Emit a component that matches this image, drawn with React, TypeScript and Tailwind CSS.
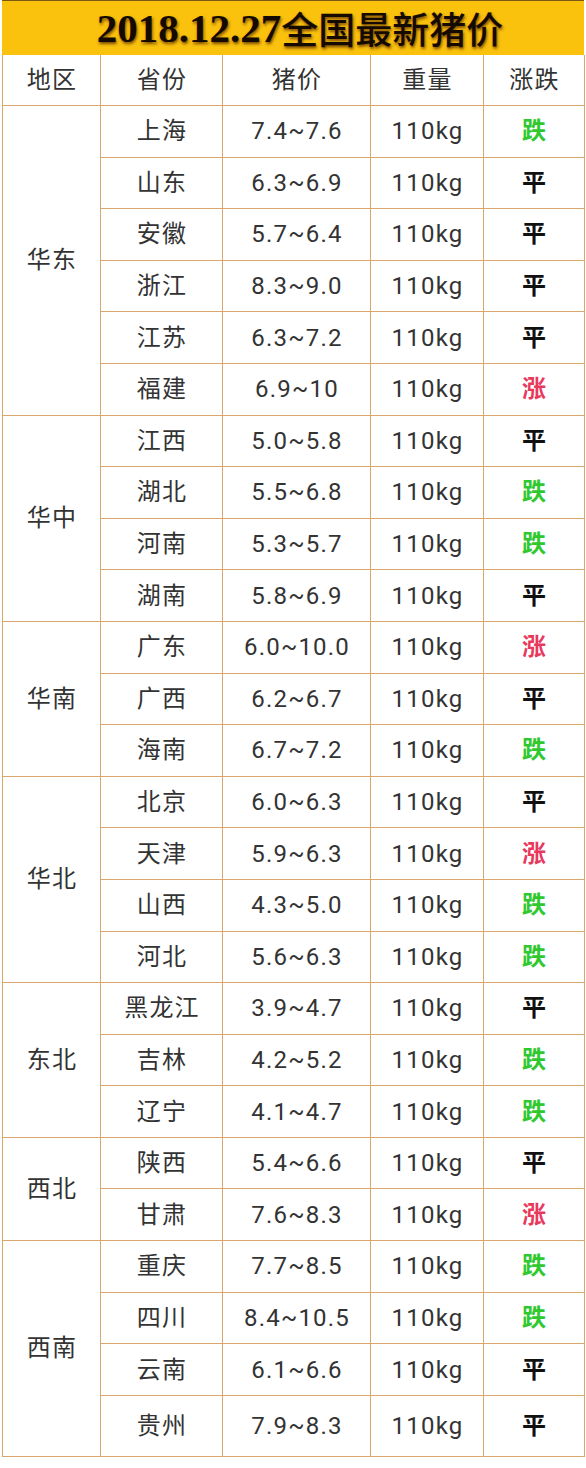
import React from "react";

type Row = { p: string; price: string; t: "up" | "down" | "flat" };
type Group = { region: string; rows: Row[] };

const groups: Group[] = [
  {
    region: "华东",
    rows: [
      { p: "上海", price: "7.4~7.6", t: "down" },
      { p: "山东", price: "6.3~6.9", t: "flat" },
      { p: "安徽", price: "5.7~6.4", t: "flat" },
      { p: "浙江", price: "8.3~9.0", t: "flat" },
      { p: "江苏", price: "6.3~7.2", t: "flat" },
      { p: "福建", price: "6.9~10", t: "up" },
    ],
  },
  {
    region: "华中",
    rows: [
      { p: "江西", price: "5.0~5.8", t: "flat" },
      { p: "湖北", price: "5.5~6.8", t: "down" },
      { p: "河南", price: "5.3~5.7", t: "down" },
      { p: "湖南", price: "5.8~6.9", t: "flat" },
    ],
  },
  {
    region: "华南",
    rows: [
      { p: "广东", price: "6.0~10.0", t: "up" },
      { p: "广西", price: "6.2~6.7", t: "flat" },
      { p: "海南", price: "6.7~7.2", t: "down" },
    ],
  },
  {
    region: "华北",
    rows: [
      { p: "北京", price: "6.0~6.3", t: "flat" },
      { p: "天津", price: "5.9~6.3", t: "up" },
      { p: "山西", price: "4.3~5.0", t: "down" },
      { p: "河北", price: "5.6~6.3", t: "down" },
    ],
  },
  {
    region: "东北",
    rows: [
      { p: "黑龙江", price: "3.9~4.7", t: "flat" },
      { p: "吉林", price: "4.2~5.2", t: "down" },
      { p: "辽宁", price: "4.1~4.7", t: "down" },
    ],
  },
  {
    region: "西北",
    rows: [
      { p: "陕西", price: "5.4~6.6", t: "flat" },
      { p: "甘肃", price: "7.6~8.3", t: "up" },
    ],
  },
  {
    region: "西南",
    rows: [
      { p: "重庆", price: "7.7~8.5", t: "down" },
      { p: "四川", price: "8.4~10.5", t: "down" },
      { p: "云南", price: "6.1~6.6", t: "flat" },
      { p: "贵州", price: "7.9~8.3", t: "flat" },
    ],
  },
];

const spanClass: Record<number, string> = {
  2: "row-span-2",
  3: "row-span-3",
  4: "row-span-4",
  6: "row-span-6",
};

const cell =
  "flex items-center justify-center border-r-[1.5px] border-b-[1.5px] border-[#d9a66e] pl-[1px]";

function Trend({ t }: { t: Row["t"] }) {
  if (t === "up")
    return <span className="font-bold text-[#e8385e]">涨</span>;
  if (t === "down")
    return <span className="font-bold text-[#2fc92f]">跌</span>;
  return <span className="font-bold text-[#111]">平</span>;
}

export default function App() {
  return (
    <div className="w-[586px] h-[1468px] bg-white font-['Roboto','Noto_Sans_CJK_SC',sans-serif] text-[24px] text-[#333] tracking-[1.2px]">
      <div className="mx-[2px] h-[55px] bg-[#fac20c] border-t border-[#7a5a10] flex items-center justify-center pl-[14px] tracking-normal [text-shadow:1px_2px_3px_rgba(110,60,0,0.9)] text-[#140a00]">
        <span className="font-['Liberation_Serif',serif] font-bold text-[41px] leading-none">
          2018.12.27
        </span>
        <span className="font-['Noto_Sans_CJK_SC',sans-serif] font-medium text-[37px] leading-none">
          全国最新猪价
        </span>
      </div>
      <div className="mx-[2px] grid grid-cols-[98px_122px_148px_113px_101px] grid-rows-[51px_repeat(25,51.6px)_61px] border-l-[1.5px] border-[#d9a66e]">
        <div className={cell}>地区</div>
        <div className={cell}>省份</div>
        <div className={cell}>猪价</div>
        <div className={cell}>重量</div>
        <div className={cell}>涨跌</div>
        {groups.map((g) =>
          g.rows.map((r, i) => (
            <React.Fragment key={g.region + r.p}>
              {i === 0 && (
                <div className={`${cell} ${spanClass[g.rows.length]}`}>
                  {g.region}
                </div>
              )}
              <div className={cell}>{r.p}</div>
              <div className={cell}>{r.price}</div>
              <div className={cell}>110kg</div>
              <div className={cell}>
                <Trend t={r.t} />
              </div>
            </React.Fragment>
          ))
        )}
      </div>
    </div>
  );
}
